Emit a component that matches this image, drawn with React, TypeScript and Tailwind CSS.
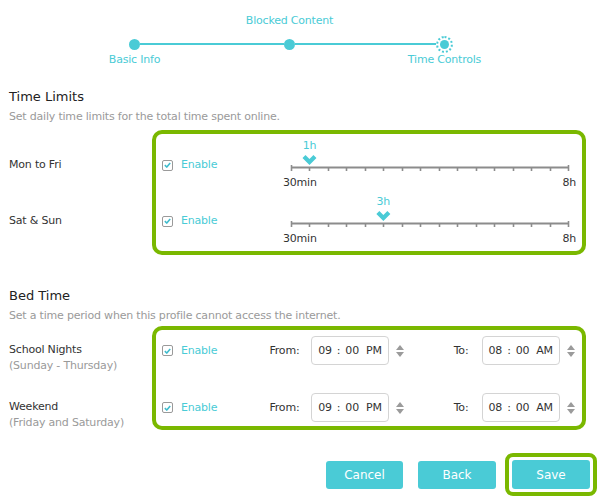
import React from 'react';

const steps = [
  { name: 'Basic Info', pos: 'bottom' },
  { name: 'Blocked Content', pos: 'top' },
  { name: 'Time Controls', pos: 'bottom' },
];

// 16 ticks: 30min .. 8h in 30 min steps
const TICKS = Array.from({ length: 16 }, (_, i) => i);
const TRACK_X0 = 9;
const TRACK_STEP = 18.47;

const Check = () => (
  <span className="w-[11px] h-[11px] border border-[#9a9a9a] rounded-[2px] bg-white flex items-center justify-center shrink-0">
    <svg width="7" height="6" viewBox="0 0 7 6">
      <path d="M0.8 3.2 L2.8 5 L6.2 1" fill="none" stroke="#3fbccd" strokeWidth="1.6" />
    </svg>
  </span>
);

const Enable = () => (
  <div className="flex items-center gap-[8px] h-[14px]">
    <Check />
    <span className="text-[#4acbd6]">Enable</span>
  </div>
);

const Slider = ({ value, step }: { value: string; step: number }) => {
  const hx = TRACK_X0 + step * TRACK_STEP;
  return (
    <div className="w-[294px] h-[56px] flex flex-col">
      <div className="relative h-[19px]">
        <span
          className="absolute top-[5px] w-[24px] text-center leading-[14px] text-[#4acbd6]"
          style={{ left: hx - 12 }}
        >
          {value}
        </span>
      </div>
      <svg width="294" height="21" viewBox="0 0 294 21" className="block">
        <line x1={TRACK_X0} y1="14.5" x2={TRACK_X0 + 15 * TRACK_STEP} y2="14.5" stroke="#8c8c8c" strokeWidth="2" />
        {TICKS.map((i) => {
          const x = Math.round(TRACK_X0 + i * TRACK_STEP) + 0.5;
          const end = i === 0 || i === 15;
          return <line key={i} x1={x} y1={end ? 12 : 14} x2={x} y2="18" stroke="#8c8c8c" strokeWidth="1.6" />;
        })}
        <path
          d={`M${hx - 7} 5 L${hx - 4} 2 L${hx} 6 L${hx + 4} 2 L${hx + 7} 5 L${hx} 12 Z`}
          fill="#4acbd6"
        />
      </svg>
      <div className="mt-[2px] h-[14px] leading-[14px] flex justify-between pl-[1px] text-[#333]">
        <span>30min</span>
        <span>8h</span>
      </div>
    </div>
  );
};

const Spinner = () => (
  <div className="w-[22px] flex justify-center">
    <svg width="8" height="12" viewBox="0 0 8 12">
      <path d="M0 5 L4 0 L8 5 Z" fill="#9b9b9b" />
      <path d="M0 7 L4 12 L8 7 Z" fill="#9b9b9b" />
    </svg>
  </div>
);

const TimeBox = ({ h, m, ap }: { h: string; m: string; ap: string }) => (
  <div className="h-[29px] border border-[#d4d4d4] rounded-[4px] bg-white flex items-center pl-[6px] text-[#333] text-[11px]">
    <span>{h}</span>
    <span className="ml-[5px]">:</span>
    <span className="ml-[5px]">{m}</span>
    <span className="ml-[7px]">{ap}</span>
  </div>
);

const BedRow = ({ from, to }: { from: string; to: string }) => (
  <div className="flex items-center h-[29px]">
    <div className="w-[114px] pl-[6px]">
      <Enable />
    </div>
    <span className="w-[42px] text-[#333]">From:</span>
    <div className="w-[78px]">
      <TimeBox h={from.split(':')[0]} m="00" ap="PM" />
    </div>
    <Spinner />
    <span className="ml-[43px] w-[28px] text-[#333]">To:</span>
    <div className="w-[79px]">
      <TimeBox h={to.split(':')[0]} m="00" ap="AM" />
    </div>
    <Spinner />
  </div>
);

export default function App() {
  return (
    <div className="w-[600px] h-[498px] bg-white overflow-hidden font-['DejaVu_Sans',sans-serif] text-[11px] tracking-[-0.2px] leading-[14px] text-[#333]">
      {/* Stepper */}
      <div className="pl-[57px] pt-[13px]">
        <div className="grid grid-cols-3 w-[465px]">
          {steps.map((s, i) => (
            <div key={s.name} className="flex flex-col items-center">
              <div className="h-[16px] leading-[16px] text-[#4acbd6] whitespace-nowrap">{s.pos === 'top' ? s.name : ''}</div>
              <div className="mt-[6px] h-[18px] w-full flex items-center">
                <div className={i === 0 ? 'flex-1 h-[2px]' : 'flex-1 h-[2px] bg-[#4acbd6]'} />
                {i === 2 ? (
                  <span className="w-[17px] h-[17px] rounded-full border-2 border-dotted border-[#4acbd6] flex items-center justify-center">
                    <span className="w-[9px] h-[9px] rounded-full bg-[#4acbd6]" />
                  </span>
                ) : (
                  <span className="w-[11px] h-[11px] rounded-full bg-[#4acbd6]" />
                )}
                <div className={i === 2 ? 'flex-1 h-[2px]' : 'flex-1 h-[2px] bg-[#4acbd6]'} />
              </div>
              <div className="h-[14px] leading-[14px] text-[#4acbd6] whitespace-nowrap">{s.pos === 'bottom' ? s.name : ''}</div>
            </div>
          ))}
        </div>
      </div>

      {/* Time Limits */}
      <div className="pl-[9px]">
        <h2 className="mt-[21px] text-[13px] leading-[18px] tracking-normal text-[#222]">Time Limits</h2>
        <p className="mt-[4px] text-[#9a9a9a]">Set daily time limits for the total time spent online.</p>
        <div className="mt-[6px] flex items-start">
          <div className="w-[143px] pt-[4px]">
            <div className="h-[56px] pt-[24px]">Mon to Fri</div>
            <div className="h-[56px] pt-[24px]">Sat &amp; Sun</div>
          </div>
          <div className="w-[434px] border-4 border-[#7ab800] rounded-[10px] pb-[5px]">
            <div className="flex h-[56px]">
              <div className="w-[126px] pl-[6px] pt-[24px]">
                <Enable />
              </div>
              <Slider value="1h" step={1} />
            </div>
            <div className="flex h-[56px]">
              <div className="w-[126px] pl-[6px] pt-[24px]">
                <Enable />
              </div>
              <Slider value="3h" step={5} />
            </div>
          </div>
        </div>

        {/* Bed Time */}
        <h2 className="mt-[32px] text-[13px] leading-[18px] tracking-normal text-[#222]">Bed Time</h2>
        <p className="mt-[4px] text-[#9a9a9a]">Set a time period when this profile cannot access the internet.</p>
        <div className="mt-[3px] flex items-start">
          <div className="w-[143px] pt-[16px] leading-[16px]">
            <div className="h-[57px]">
              <div>School Nights</div>
              <div className="text-[#9a9a9a]">(Sunday - Thursday)</div>
            </div>
            <div>
              <div>Weekend</div>
              <div className="text-[#9a9a9a]">(Friday and Saturday)</div>
            </div>
          </div>
          <div className="w-[434px] border-4 border-[#7ab800] rounded-[10px] pt-[6px] pb-[4px] flex flex-col gap-[28px]">
            <BedRow from="09:00" to="08:00" />
            <BedRow from="09:00" to="08:00" />
          </div>
        </div>
      </div>

      {/* Buttons */}
      <div className="mt-[22px] pr-[3px] flex justify-end items-center text-[12px] tracking-normal">
        <button className="w-[77px] h-[28px] rounded-[3px] bg-[#4acbd6] text-white">Cancel</button>
        <button className="ml-[15px] w-[78px] h-[28px] rounded-[3px] bg-[#4acbd6] text-white">Back</button>
        <div className="ml-[9px] border-4 border-[#7ab800] rounded-[8px] p-[3px]">
          <button className="block w-[78px] h-[29px] rounded-[3px] bg-[#4acbd6] text-white">Save</button>
        </div>
      </div>
    </div>
  );
}
